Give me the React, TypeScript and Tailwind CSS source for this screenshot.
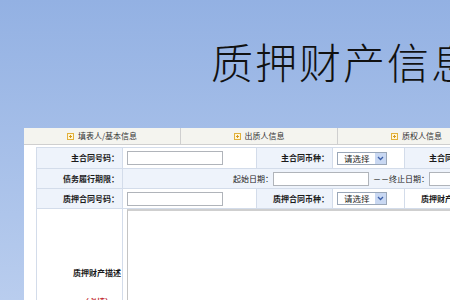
import React from "react";

const font = { fontFamily: '"Noto Sans CJK SC", "Noto Sans", sans-serif' };

function PlusIcon() {
  return (
    <svg width="7" height="7" viewBox="0 0 7 7" className="shrink-0">
      <rect x="0.5" y="0.5" width="6" height="6" fill="#fff6d8" stroke="#e2b13c" strokeWidth="1" />
      <path d="M2 3.5H5M3.5 2V5" stroke="#d69a1e" strokeWidth="1" />
    </svg>
  );
}

function Tab({ label, last }: { label: string; last?: boolean }) {
  return (
    <div
      className={
        "w-[157px] shrink-0 flex items-center justify-center gap-[4px] text-[8px] text-[#333] " +
        (last ? "" : "border-r border-[#cfcfcf]")
      }
    >
      <PlusIcon />
      <span>{label}</span>
    </div>
  );
}

function Select() {
  return (
    <div className="w-[50px] h-[13px] border border-[#9aa7b8] bg-white flex items-center">
      <span className="flex-1 pl-[6px] text-[8.5px] leading-none text-[#222]">请选择</span>
      <span className="w-[11px] h-[11px] bg-[#c9d8f2] flex items-center justify-center">
        <svg width="7" height="5" viewBox="0 0 7 5">
          <path d="M1 1L3.5 3.5L6 1" fill="none" stroke="#3b5fa8" strokeWidth="1.3" />
        </svg>
      </span>
    </div>
  );
}

function Input({ w }: { w: string }) {
  return <div className={"h-[14px] border border-[#b0b4ba] bg-white " + w} />;
}

const label = "bg-[#eef3fb] text-right font-bold text-[8px] text-[#1a1a1a] pr-[3px] border border-[#d3dcea]";
const value = "bg-white border border-[#d3dcea] px-[4px]";

export default function App() {
  return (
    <div
      className="w-[450px] h-[300px] overflow-hidden bg-gradient-to-b from-[#93b1e3] to-[#b9cdee] flex flex-col"
      style={font}
    >
      <div className="h-[128px] shrink-0 pl-[211px] pt-[40px]">
        <div className="text-[42px] leading-[42px] tracking-[2px] text-[#111] whitespace-nowrap font-light">
          质押财产信息
        </div>
      </div>
      <div className="ml-[24px] w-[520px] bg-white flex-1 flex flex-col">
        <div className="h-[17px] flex bg-[#f4f4ef] border-b border-[#cfcfcf]">
          <Tab label="填表人/基本信息" />
          <Tab label="出质人信息" />
          <Tab label="质权人信息" last />
        </div>
        <div className="pl-[12px] pt-[2px]">
          <table className="table-fixed border-collapse w-[508px]">
            <colgroup>
              <col className="w-[86px]" />
              <col className="w-[134px]" />
              <col className="w-[76px]" />
              <col className="w-[72px]" />
              <col className="w-[76px]" />
              <col className="w-[64px]" />
            </colgroup>
            <tbody>
              <tr className="h-[21px]">
                <td className={label}>主合同号码：</td>
                <td className={value}>
                  <Input w="w-[96px]" />
                </td>
                <td className={label}>主合同币种：</td>
                <td className={value + " bg-[#eef3fb]"}>
                  <Select />
                </td>
                <td className={label + " whitespace-nowrap overflow-hidden"}>主合同金额：</td>
                <td className={value}></td>
              </tr>
              <tr className="h-[20px]">
                <td className={label}>债务履行期限：</td>
                <td colSpan={5} className="bg-[#eef3fb] border border-[#d3dcea]">
                  <div className="flex items-center pl-[110px] text-[8px] text-[#222] whitespace-nowrap">
                    <span>起始日期：</span>
                    <Input w="w-[96px]" />
                    <span className="ml-[4px]">－－终止日期：</span>
                    <Input w="w-[60px]" />
                  </div>
                </td>
              </tr>
              <tr className="h-[20px]">
                <td className={label}>质押合同号码：</td>
                <td className={value}>
                  <Input w="w-[96px]" />
                </td>
                <td className={label}>质押合同币种：</td>
                <td className={value}>
                  <Select />
                </td>
                <td className={label + " bg-white whitespace-nowrap overflow-hidden"}>质押财产价值：</td>
                <td className={value}></td>
              </tr>
              <tr className="h-[120px] align-top">
                <td className="bg-white border border-[#d3dcea] text-right pr-[1px]">
                  <div className="pt-[58px] font-bold text-[8px] text-[#1a1a1a]">质押财产描述</div>
                  <div className="mt-[17px] pr-[8px] font-bold text-[8px] text-[#c0262d]">（必填）</div>
                </td>
                <td colSpan={5} className="bg-white border border-[#d3dcea] pl-[4px] pt-0">
                  <div className="h-[110px] border-t-2 border-l border-t-[#cfcfcf] border-l-[#c4c4c4] bg-white" />
                </td>
              </tr>
            </tbody>
          </table>
        </div>
      </div>
    </div>
  );
}
